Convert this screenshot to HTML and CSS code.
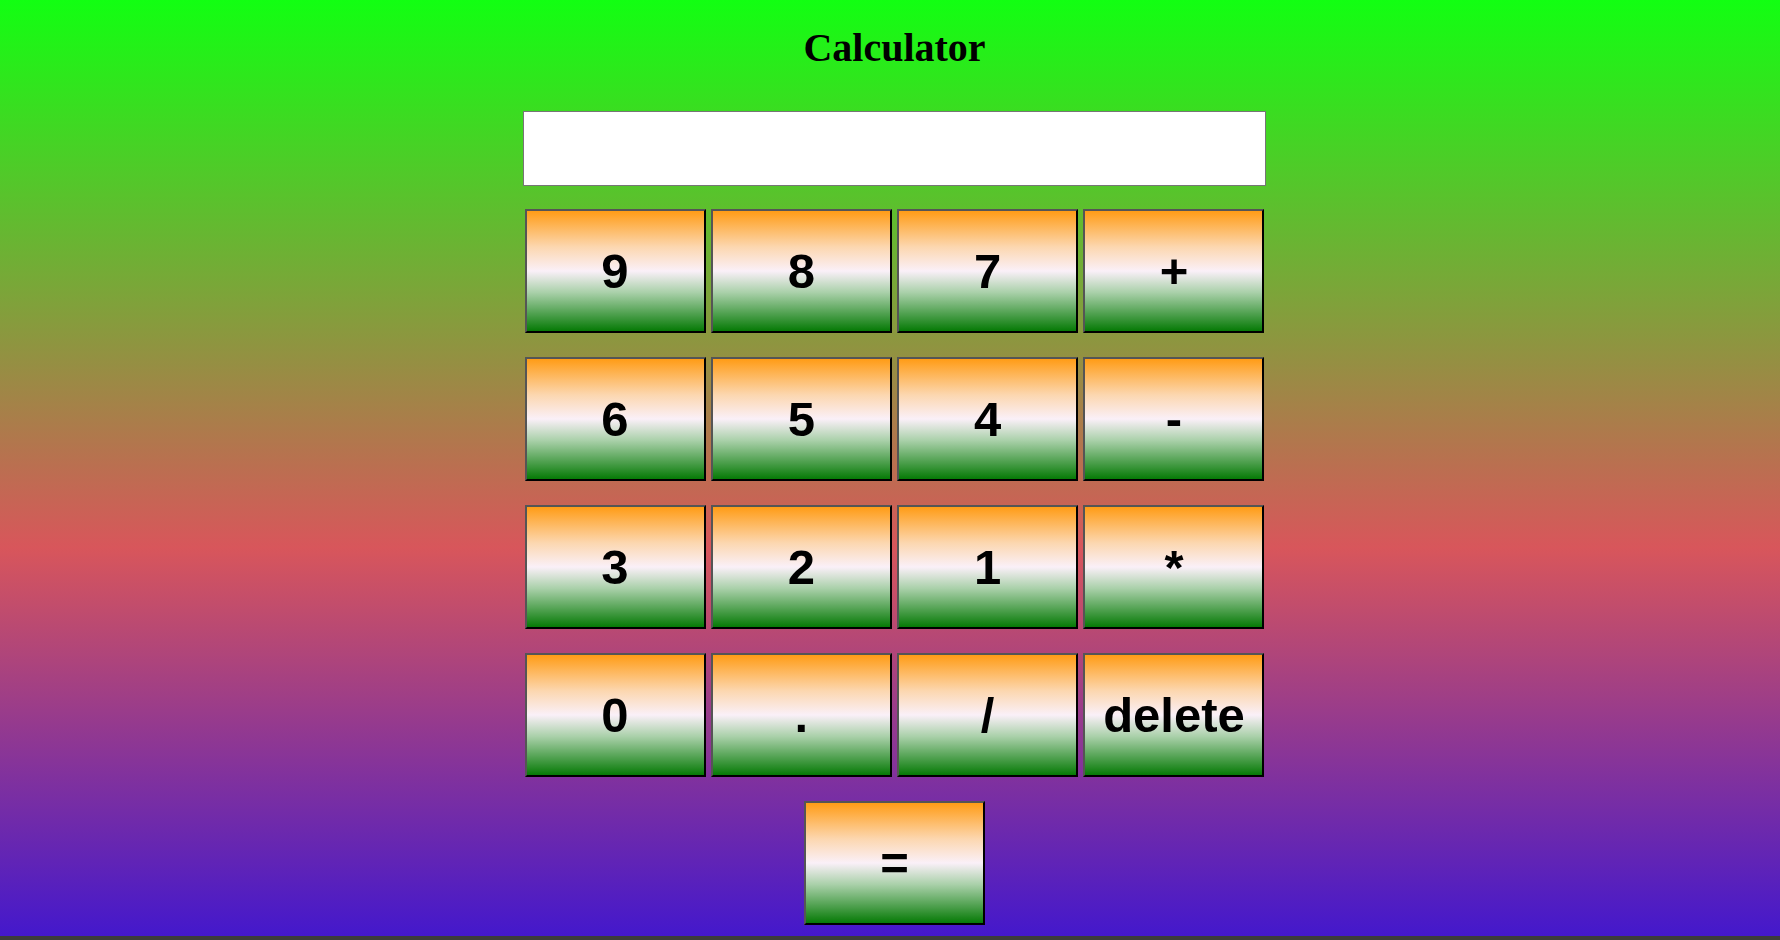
FILE: index.html
```html
<!DOCTYPE html>
<html lang="en">
<head>
<meta charset="utf-8">
<title>Calculator</title>
<link rel="stylesheet" href="styles.css">
</head>
<body>
  <main class="calc">
    <h1 class="title">Calculator</h1>
    <input class="display" type="text">
    <div class="keys">
      <button class="key">9</button>
      <button class="key">8</button>
      <button class="key">7</button>
      <button class="key">+</button>
      <button class="key">6</button>
      <button class="key">5</button>
      <button class="key">4</button>
      <button class="key">-</button>
      <button class="key">3</button>
      <button class="key">2</button>
      <button class="key">1</button>
      <button class="key">*</button>
      <button class="key">0</button>
      <button class="key">.</button>
      <button class="key">/</button>
      <button class="key">delete</button>
      <button class="key key-equals">=</button>
    </div>
  </main>
</body>
</html>
```
FILE: styles.css
```css
html {
  background: #3c3c3c;
  height: 100%;
}
body {
  margin: 0;
  height: 936px;
  box-sizing: border-box;
  padding-left: 9px;
  background: linear-gradient(to bottom, #12ff12 0%, #d8565b 58.5%, #4418cc 100%);
}
.calc {
  display: flex;
  flex-direction: column;
  align-items: center;
}
.title {
  margin: 25px 0 40px;
  font-family: "Liberation Serif", "Times New Roman", serif;
  font-weight: bold;
  font-size: 40px;
  line-height: 46px;
  color: #000;
}
.display {
  box-sizing: border-box;
  width: 743px;
  height: 75px;
  margin: 0 0 23px;
  border: 1px solid #767676;
  background: #fff;
  padding: 0 4px;
  font-family: "Liberation Sans", Arial, sans-serif;
  font-size: 32px;
}
.keys {
  display: grid;
  grid-template-columns: repeat(4, 181px);
  column-gap: 5.33px;
  row-gap: 24px;
}
.key {
  box-sizing: border-box;
  width: 181px;
  height: 124px;
  margin: 0;
  padding: 0;
  border: 2px solid;
  border-color: #555 #000 #000 #555;
  background: linear-gradient(to bottom, #ff9c16 0%, #fcd7b0 30%, #faf0f8 50%, #a9d0a9 68%, #067a06 100%);
  font-family: "Liberation Sans", Arial, sans-serif;
  font-weight: bold;
  font-size: 49px;
  color: #000;
  display: flex;
  align-items: center;
  justify-content: center;
}
.key-equals {
  grid-column: 2 / 4;
  justify-self: center;
}
```
